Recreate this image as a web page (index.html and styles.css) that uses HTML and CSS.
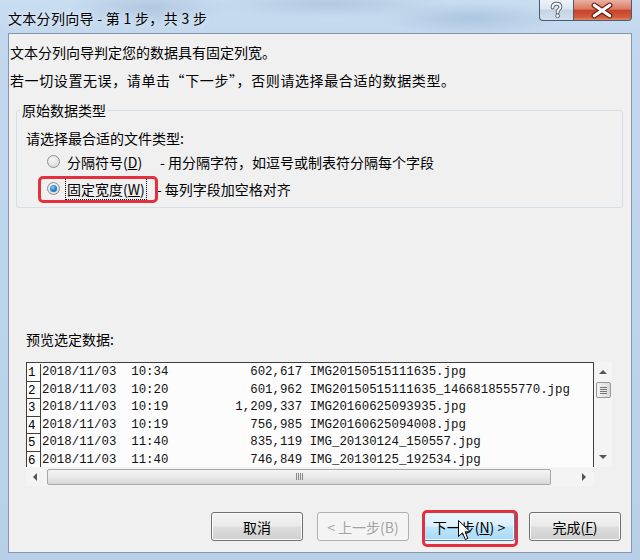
FILE: index.html
```html
<!DOCTYPE html>
<html lang="zh-CN">
<head>
<meta charset="utf-8">
<title>文本分列向导</title>
<link rel="stylesheet" href="styles.css">
</head>
<body>
<div class="window">
  <div class="titlebar">
    <div class="title">文本分列向导 - 第 1 步，共 3 步</div>
    <div class="caption-btns">
      <div class="cbtn help">
        <svg width="34" height="21" viewBox="0 0 34 21">
          <path d="M13 7.5 C13 4.5 15 3.5 17 3.5 C19.5 3.5 21 5 21 7 C21 9 19 9.8 18.2 10.8 L18.2 12.5" fill="none" stroke="#5d6675" stroke-width="4" stroke-linecap="round"/>
          <path d="M13 7.5 C13 4.5 15 3.5 17 3.5 C19.5 3.5 21 5 21 7 C21 9 19 9.8 18.2 10.8 L18.2 12.5" fill="none" stroke="#f4f7fb" stroke-width="2" stroke-linecap="round"/>
          <circle cx="18.2" cy="16" r="2" fill="#f4f7fb" stroke="#5d6675" stroke-width="1"/>
        </svg>
      </div>
      <div class="cbtn close">
        <svg width="59" height="21" viewBox="0 0 59 21">
          <path d="M21 5 L37 16 M37 5 L21 16" stroke="#6b1c12" stroke-width="5.5" stroke-linecap="round"/>
          <path d="M21 5 L37 16 M37 5 L21 16" stroke="#ffffff" stroke-width="3.2" stroke-linecap="round"/>
        </svg>
      </div>
    </div>
  </div>

  <div class="client">
    <p class="line">文本分列向导判定您的数据具有固定列宽。</p>
    <p class="line wide">若一切设置无误，请单击“下一步”，否则请选择最合适的数据类型。</p>

    <fieldset class="group">
      <legend>原始数据类型</legend>
      <div class="prompt">请选择最合适的文件类型:</div>
      <div class="opt">
        <span class="radio"></span>
        <span class="olabel">分隔符号(<u>D</u>)</span>
        <span class="desc">- 用分隔字符，如逗号或制表符分隔每个字段</span>
      </div>
      <div class="opt">
        <span class="radio checked"></span>
        <span class="olabel focus">固定宽度(<u>W</u>)</span>
        <span class="desc desc2">- 每列字段加空格对齐</span>
        <span class="mark mark-radio"></span>
      </div>
    </fieldset>

    <div class="preview-label">预览选定数据:</div>

    <div class="preview">
      <div class="data">
        <div class="row"><span class="num">1</span><span class="txt">2018/11/03  10:34           602,617 IMG20150515111635.jpg</span></div>
        <div class="row"><span class="num">2</span><span class="txt">2018/11/03  10:20           601,962 IMG20150515111635_1466818555770.jpg</span></div>
        <div class="row"><span class="num">3</span><span class="txt">2018/11/03  10:19         1,209,337 IMG20160625093935.jpg</span></div>
        <div class="row"><span class="num">4</span><span class="txt">2018/11/03  10:19           756,985 IMG20160625094008.jpg</span></div>
        <div class="row"><span class="num">5</span><span class="txt">2018/11/03  11:40           835,119 IMG_20130124_150557.jpg</span></div>
        <div class="row"><span class="num">6</span><span class="txt">2018/11/03  11:40           746,849 IMG_20130125_192534.jpg</span></div>
      </div>
      <div class="vscroll">
        <span class="arr arr-up"></span>
        <span class="vthumb"><span class="grip-h"></span></span>
        <span class="vspace"></span>
        <span class="arr arr-down"></span>
      </div>
      <div class="hscroll">
        <span class="arr arr-left"></span>
        <span class="hthumb"><span class="grip-v"></span></span>
        <span class="hspace"></span>
        <span class="arr arr-right"></span>
      </div>
      <div class="corner"></div>
    </div>

    <div class="buttons">
      <button class="btn">取消</button>
      <button class="btn disabled">&lt; 上一步(B)</button>
      <span class="btn-wrap">
        <button class="btn hover">下一步(<u>N</u>) &gt;</button>
        <span class="mark mark-btn"></span>
      </span>
      <button class="btn">完成(<u>F</u>)</button>
    </div>
  </div>
</div>

<svg class="cursor" width="14" height="22" viewBox="0 0 14 22">
  <path d="M0.5 0.5 L0.5 16.5 L4.5 12.8 L7.3 19.5 L9.8 18.4 L7.1 11.8 L12.3 11.8 Z" fill="#ffffff" stroke="#000000" stroke-width="1" stroke-linejoin="miter"/>
</svg>
</body>
</html>
```

FILE: styles.css
```css
html, body {
  margin: 0;
  padding: 0;
}

body {
  width: 640px;
  height: 560px;
  overflow: hidden;
  font-family: "Noto Sans CJK SC", "Noto Sans", sans-serif;
  font-size: 14px;
  color: #000;
  background:
    radial-gradient(ellipse 80px 18px at 150px 8px, rgba(150,175,205,0.45), transparent),
    radial-gradient(ellipse 120px 14px at 330px 4px, rgba(140,165,195,0.35), transparent),
    radial-gradient(ellipse 90px 16px at 470px 18px, rgba(120,150,190,0.30), transparent),
    linear-gradient(to bottom, #c9ddf1 0%, #c3d8ee 6%, #bed4ec 50%, #b8cfe8 100%);
  position: relative;
}

.window {
  height: 560px;
  display: flex;
  flex-direction: column;
}

.titlebar {
  height: 33px;
  display: flex;
  align-items: flex-start;
  flex: none;
}

.title {
  padding: 8px 0 0 8px;
  font-size: 14px;
  line-height: 20px;
  letter-spacing: 0.3px;
  color: #000;
  text-shadow: 0 0 6px rgba(255,255,255,0.9);
}

.caption-btns {
  margin-left: auto;
  margin-right: 8px;
  display: flex;
}

.cbtn {
  height: 21px;
  box-sizing: border-box;
  border: 1px solid #4b5b70;
  border-top: none;
  display: flex;
}

.help {
  width: 34px;
  border-radius: 0 0 0 4px;
  border-right: none;
  background: linear-gradient(to bottom, #eef3f9 0%, #dde6f1 45%, #c6d3e3 50%, #d3dfee 100%);
}

.close {
  width: 59px;
  border-radius: 0 0 4px 0;
  background: linear-gradient(to bottom, #eab1a3 0%, #db7a62 45%, #c7442a 52%, #cf5a3c 85%, #e38a66 100%);
}

.client {
  flex: none;
  height: 520px;
  box-sizing: border-box;
  margin: 0 8px 0 8px;
  border: 1px solid #8496ad;
  background: #f0f0f0;
  padding-top: 4px;
}

.line {
  margin: 0;
  padding-left: 1px;
  line-height: 28px;
  white-space: nowrap;
}

.line.wide {
  letter-spacing: 0.6px;
}

.group {
  margin: 6px 8px 0 7px;
  padding: 0 9px 5px 9px;
  border: 1px solid #d5dfe5;
  border-radius: 3px;
  min-width: 0;
}

.group legend {
  padding: 0 2px;
  margin-left: -6px;
  line-height: 20px;
}

.prompt {
  margin-top: 8px;
  line-height: 20px;
}

.opt {
  position: relative;
  height: 27px;
  display: flex;
  align-items: center;
  white-space: nowrap;
}

.radio {
  width: 13px;
  height: 13px;
  box-sizing: border-box;
  margin-left: 21px;
  border-radius: 50%;
  border: 1px solid #8e8f8f;
  background: radial-gradient(circle at 40% 35%, #f6f6f6 0%, #e4e4e4 55%, #cfcfcf 100%);
  flex: none;
  position: relative;
}

.radio.checked::after {
  content: "";
  position: absolute;
  left: 2px;
  top: 2px;
  width: 7px;
  height: 7px;
  border-radius: 50%;
  background: radial-gradient(circle at 40% 35%, #8ad2f6 0%, #2a8ad4 45%, #0d4ba0 100%);
}

.olabel {
  margin-left: 7px;
  width: 93px;
  flex: none;
}

.olabel.focus {
  width: auto;
  padding: 0 1px;
  margin-left: 6px;
  margin-right: 11px;
  outline: 1px dotted #000;
  line-height: 20px;
}

.mark {
  position: absolute;
  box-sizing: border-box;
  border: 3px solid #e3303f;
  border-radius: 5px;
  pointer-events: none;
}

.mark-radio {
  left: 12px;
  top: 1px;
  width: 120px;
  height: 27px;
}

.preview-label {
  margin: 121px 0 0 17px;
  line-height: 20px;
}

.preview {
  margin: 13px 0 0 17px;
  width: 586px;
  display: grid;
  grid-template-columns: 568px 18px;
  grid-template-rows: 105px 19px;
}

.data {
  border: 1px solid #3e3e3e;
  border-bottom: none;
  background: #fcfcfc;
  overflow: hidden;
  padding-top: 1px;
}

.row {
  display: flex;
  height: 17.6px;
  font-family: "Liberation Mono", "DejaVu Sans Mono", monospace;
  font-size: 12.4px;
  line-height: 17.6px;
  white-space: pre;
}

.num {
  width: 14px;
  flex: none;
  box-sizing: border-box;
  border-right: 1px solid #3e3e3e;
  border-bottom: 1px solid #3e3e3e;
  padding-left: 1px;
  line-height: 19px;
  overflow: hidden;
}

.txt {
  padding-left: 1px;
  color: #111;
}

.vscroll {
  grid-column: 2;
  grid-row: 1;
  display: flex;
  flex-direction: column;
  align-items: center;
  background: #f4f4f4;
}

.hscroll {
  grid-column: 1;
  grid-row: 2;
  display: flex;
  align-items: center;
  background: #f4f4f4;
}

.corner {
  grid-column: 2;
  grid-row: 2;
  background: #f0f0f0;
}

.arr {
  width: 0;
  height: 0;
  flex: none;
}

.arr-up {
  margin-top: 8px;
  border-left: 4px solid transparent;
  border-right: 4px solid transparent;
  border-bottom: 4px solid #555;
}

.arr-down {
  margin-bottom: 8px;
  border-left: 4px solid transparent;
  border-right: 4px solid transparent;
  border-top: 4px solid #555;
}

.arr-left {
  margin-left: 7px;
  border-top: 4px solid transparent;
  border-bottom: 4px solid transparent;
  border-right: 4px solid #555;
}

.arr-right {
  margin-right: 8px;
  border-top: 4px solid transparent;
  border-bottom: 4px solid transparent;
  border-left: 4px solid #555;
}

.vthumb {
  margin-top: 8px;
  width: 15px;
  height: 16px;
  box-sizing: border-box;
  border: 1px solid #979797;
  border-radius: 2px;
  background: linear-gradient(to right, #f3f3f3, #e6e6e6 50%, #d9d9d9);
  display: flex;
  align-items: center;
  justify-content: center;
}

.grip-h {
  width: 7px;
  height: 7px;
  background: repeating-linear-gradient(to bottom, #777 0 1px, transparent 1px 2px);
}

.vspace {
  flex: 1;
}

.hthumb {
  margin-left: 10px;
  width: 504px;
  height: 16px;
  box-sizing: border-box;
  border: 1px solid #a7a7a7;
  border-radius: 2px;
  background: linear-gradient(to bottom, #f4f4f4, #e8e8e8 50%, #d8d8d8);
  display: flex;
  align-items: center;
  justify-content: center;
}

.grip-v {
  width: 7px;
  height: 7px;
  background: repeating-linear-gradient(to right, #888 0 1px, transparent 1px 2px);
}

.hspace {
  flex: 1;
}

.buttons {
  margin-top: 26px;
  padding-right: 10px;
  display: flex;
  justify-content: flex-end;
  gap: 14px;
}

.btn-wrap {
  position: relative;
  display: flex;
}

.btn {
  width: 92px;
  height: 29px;
  padding: 0;
  font-family: "Noto Sans CJK SC", "Noto Sans", sans-serif;
  font-size: 14px;
  color: #000;
  border: 1px solid #707070;
  border-radius: 3px;
  background: linear-gradient(to bottom, #f2f2f2 0%, #ebebeb 48%, #dddddd 52%, #cfcfcf 100%);
  box-shadow: inset 0 0 0 1px #fbfbfb;
}

.btn.disabled {
  color: #a3a3a3;
  border-color: #adb2b5;
  background: #f4f4f4;
  box-shadow: none;
}

.btn.hover {
  border-color: #3c7fb1;
  background: linear-gradient(to bottom, #eaf6fd 0%, #d9f0fc 48%, #bee6fd 52%, #a7d9f5 100%);
  box-shadow: inset 0 0 0 1px #f3faff;
}

.mark-btn {
  left: -1px;
  top: -2px;
  width: 96px;
  height: 37px;
}

.cursor {
  position: absolute;
  left: 458px;
  top: 520px;
}
```
